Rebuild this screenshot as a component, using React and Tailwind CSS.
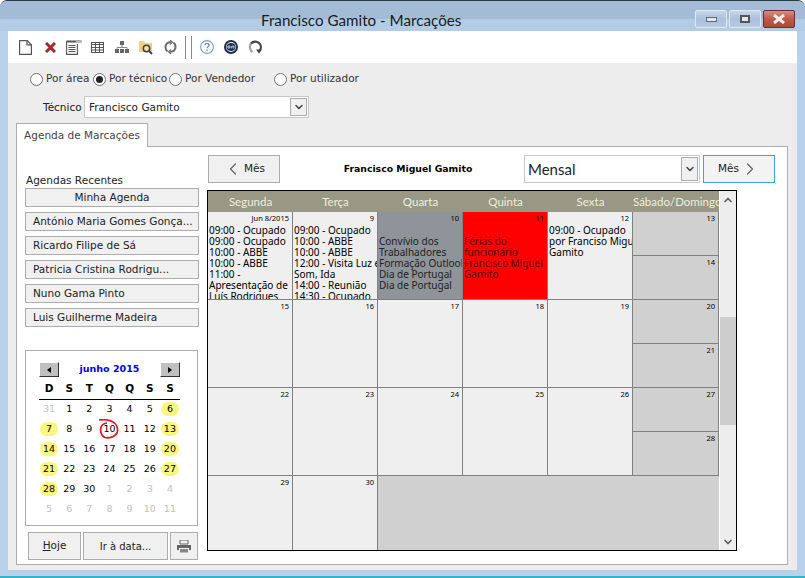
import { ChevronLeft, ChevronRight, ChevronDown, ChevronUp } from "lucide-react";

const UI = "font-['DejaVu_Sans',sans-serif]";
const SEGOE = "font-['Lato',sans-serif]";
const CELL = "font-['Noto_Sans',sans-serif]";

function Radio({ label, checked, width, low }) {
  return (
    <label className={`flex items-center gap-[3px] ${low ? "mt-px" : ""}`} style={{ width }}>
      <span className="flex h-[13px] w-[13px] shrink-0 items-center justify-center rounded-full border border-[#707070] bg-white">
        {checked && <span className="h-[7px] w-[7px] rounded-full bg-[#222]" />}
      </span>
      <span className="whitespace-nowrap text-[10.5px] text-[#333]">{label}</span>
    </label>
  );
}

function Dropdown() {
  return (
    <span className="flex h-full w-[17px] items-center justify-center border border-[#acacac] bg-[#f0f0f0] text-[#444]">
      <ChevronDown size={12} strokeWidth={3} />
    </span>
  );
}

function RecentButton({ label, center }) {
  return (
    <button
      className={`flex h-[19px] w-[174px] items-center whitespace-nowrap border border-[#acacac] bg-[#f0f0f0] pt-px text-[10.5px] text-[#222] ${
        center ? "justify-center" : "pl-[7px]"
      }`}
    >
      {label}
    </button>
  );
}

function ToolbarIcons() {
  return (
    <div className="flex h-[32px] items-center bg-white pl-[11px]">
      {/* novo */}
      <svg width="13" height="15" viewBox="0 0 13 15" fill="none" stroke="#555" strokeWidth="1.2">
        <path d="M.6.6h7.600l4.200 4.200v9.600H.6zM8 .8v4h4.200" />
      </svg>
      {/* apagar */}
      <svg className="ml-[13px]" width="11" height="11" viewBox="0 0 11 11" stroke="#a32a2c" strokeWidth="3">
        <path d="M1 1l9 9M10 1l-9 9" />
      </svg>
      {/* lista */}
      <svg className="ml-[10px]" width="16" height="15" viewBox="0 0 16 15" fill="none">
        <path d="M.5 1.500h15" stroke="#555" strokeWidth="2" />
        <rect x="10" y="1" width="5" height="2" fill="#bbb" />
        <path d="M.6 1v13.400h10.800V4" stroke="#555" strokeWidth="1.100" />
        <path d="M2.500 5.500h7M2.500 7.500h7M2.500 9.500h7M2.500 11.500h7" stroke="#555" />
      </svg>
      {/* tabela */}
      <svg className="ml-[9px]" width="13" height="11" viewBox="0 0 13 11" fill="none" stroke="#555">
        <rect x=".5" y=".5" width="12" height="10" />
        <path d="M.5 2.500h12M.5 5.500h12M.5 8h12M4.500 1v9M8.500 1v9" />
      </svg>
      {/* organigrama */}
      <svg className="ml-[11px]" width="14" height="12" viewBox="0 0 14 12" fill="#666">
        <rect x="5" y="0" width="4" height="4" />
        <path d="M7 4v3M2 8V6.500h10V8" stroke="#888" fill="none" />
        <rect x="0" y="8" width="4" height="4" />
        <rect x="5" y="8" width="4" height="4" />
        <rect x="10" y="8" width="4" height="4" />
      </svg>
      {/* pasta com lupa */}
      <svg className="ml-[10px]" width="14" height="15" viewBox="0 0 14 15">
        <path d="M0 1h5l1 2h7v9H0z" fill="#f5d27a" />
        <circle cx="7.500" cy="8.500" r="3.200" fill="#f7e2a8" stroke="#39494a" strokeWidth="1.600" />
        <path d="M10 11l3 3" stroke="#39494a" strokeWidth="2" />
      </svg>
      {/* atualizar */}
      <svg className="ml-[11px]" width="13" height="14" viewBox="0 0 13 14" fill="none" stroke="#6a6a6a" strokeWidth="2">
        <path d="M3.500 11.500C1 9.500.8 5.500 3 3.400 4 2.500 5.500 2 7 2.300" />
        <path d="M9.500 2.500c2.500 2 2.700 6 .5 8.100-1 .9-2.500 1.400-4 1.100" />
        <path d="M6 0l2.500 2.300L6 4.500M7 9.500L4.500 11.700 7 14" strokeWidth="1.200" />
      </svg>
      <span className="ml-[8px] h-[23px] w-px bg-[#8a8a8a]" />
      <span className="ml-[5px] h-[23px] w-px bg-[#8a8a8a]" />
      {/* ajuda */}
      <svg className="ml-[8px]" width="14" height="14" viewBox="0 0 14 14" fill="none">
        <circle cx="7" cy="7" r="6.400" stroke="#62a9d8" strokeWidth="1.100" />
        <path d="M5 5.300c0-1.200 1-1.800 2-1.800s2 .6 2 1.700c0 1.400-2 1.500-2 3M7 9.500v1.500" stroke="#777" strokeWidth="1.200" />
      </svg>
      {/* online */}
      <svg className="ml-[10px]" width="14" height="14" viewBox="0 0 14 14">
        <circle cx="7" cy="7" r="6" fill="#fff" stroke="#1b2f4d" strokeWidth="2" />
        <path d="M2.500 7c0-2.500 2-4 4.500-4s4.500 1.500 4.500 4-2 4-4.500 4-4.500-1.500-4.500-4z" fill="#1b2f4d" />
        <circle cx="5" cy="7" r="1.200" fill="none" stroke="#fff" strokeWidth=".8" />
        <path d="M7.800 8.500V6.200h2v2.300" fill="none" stroke="#fff" strokeWidth=".8" />
      </svg>
      {/* recarregar */}
      <svg className="ml-[10px]" width="14" height="14" viewBox="0 0 14 14" fill="none">
        <path d="M4.500 12C1.500 10 1 6 3 3.500" stroke="#a0a0a0" strokeWidth="2.200" />
        <path d="M3 3.500C5 1 9 1 11.300 3.300c2 2 2 5 .5 7" stroke="#444" strokeWidth="2.200" />
        <path d="M8 9.500h6l-3 4z" fill="#444" />
      </svg>
    </div>
  );
}

function WindowButton({ close, children }) {
  return (
    <span
      className={`flex h-[18px] w-[32px] items-center justify-center rounded-[2px] border ${
        close
          ? "border-[#6b2a35] bg-gradient-to-b from-[#d08f83] via-[#bb5a48] to-[#ad4a3c]"
          : "border-[#dfe9f4] bg-gradient-to-b from-[#c5d6e9] via-[#a9c1dc] to-[#b4cbe5]"
      }`}
    >
      {children}
    </span>
  );
}

function MiniCalendar() {
  const weeks = [
    [31, 1, 2, 3, 4, 5, 6],
    [7, 8, 9, 10, 11, 12, 13],
    [14, 15, 16, 17, 18, 19, 20],
    [21, 22, 23, 24, 25, 26, 27],
    [28, 29, 30, 1, 2, 3, 4],
    [5, 6, 7, 8, 9, 10, 11],
  ];
  return (
    <div className="mt-[23px] h-[176px] w-[173px] border border-[#acacac] bg-white px-[13px] pt-[11px]">
      <div className="flex h-[15px] w-[141px] items-center justify-between">
        <span className="flex h-[15px] w-[20px] items-center justify-center border border-t-white border-l-white border-r-[#333] border-b-[#333] bg-[#c0c0c0]">
          <span className="h-0 w-0 border-y-[3px] border-r-[4px] border-y-transparent border-r-black" />
        </span>
        <span className="text-[9.5px] font-bold text-[#0000ee]">junho 2015</span>
        <span className="flex h-[15px] w-[20px] items-center justify-center border border-t-white border-l-white border-r-[#333] border-b-[#333] bg-[#c0c0c0]">
          <span className="h-0 w-0 border-y-[3px] border-l-[4px] border-y-transparent border-l-black" />
        </span>
      </div>
      <div className="mt-[3px] grid h-[20px] w-[141px] grid-cols-7 items-center border-b border-black pb-[1px] text-center text-[10.5px] font-bold text-black">
        {["D", "S", "T", "Q", "Q", "S", "S"].map((d, i) => (
          <span key={i}>{d}</span>
        ))}
      </div>
      <div className="grid w-[141px] grid-cols-7">
        {weeks.flatMap((week, w) =>
          week.map((day, i) => {
            const muted = (w === 0 && day > 7) || (w >= 4 && day < 15 && !(w === 4 && day > 27));
            const weekend = !muted && (i === 0 || i === 6);
            const today = w === 1 && day === 10;
            return (
              <span key={`${w}-${i}`} className="relative flex h-[20px] items-center justify-center pb-[2px]">
                <span
                  className={`flex h-[14px] w-[18px] items-center justify-center rounded-full text-[9.5px] ${
                    weekend ? "bg-[#fbf77e]" : ""
                  } ${muted ? "text-[#c0c0c0]" : "text-black"}`}
                >
                  {day}
                </span>
                {today && (
                  <svg className="absolute left-[0px] top-[-1px]" width="20" height="20" viewBox="0 0 20 20" fill="none" stroke="#e8141c" strokeWidth="1.700">
                    <path d="M0 1C4 .5 10 .5 14 3c4 2 5.500 7 4 11-2 4-8 5.500-12 4.500C2 17 1 12 2 8c1-2.500 3-3.500 6-4" />
                  </svg>
                )}
              </span>
            );
          })
        )}
      </div>
    </div>
  );
}

function Cell({ day, bg = "bg-[#efefef]", color = "text-black", lines, top = "pt-[2px]", label }) {
  return (
    <div className={`overflow-hidden ${CELL} ${bg}`}>
      <div className="h-[11px] pr-[3px] pt-[1px] text-right text-[7.5px] leading-[11px] text-black">{label || day}</div>
      {lines && (
        <div className={`pl-px ${top} text-[10px] leading-[11px] ${color}`}>
          {lines.map((l, i) => (
            <div key={i} className="whitespace-nowrap">{l}</div>
          ))}
        </div>
      )}
    </div>
  );
}

function Weekend({ a, b }) {
  return (
    <div className={`flex flex-col gap-px ${CELL}`}>
      <div className="flex-1 bg-[#d0d0d0] pr-[3px] pt-[1px] text-right text-[7.5px] leading-[11px] text-black">{a}</div>
      <div className="flex-1 bg-[#d0d0d0] pr-[3px] pt-[1px] text-right text-[7.5px] leading-[11px] text-black">{b}</div>
    </div>
  );
}

function MonthGrid() {
  const headers = ["Segunda", "Terça", "Quarta", "Quinta", "Sexta", "Sábado/Domingo"];
  return (
    <div className="mt-[7px] -ml-px flex h-[361px] w-[530px] border border-black bg-[#ededed]">
      <div className="w-[511px]">
        <div className={`grid h-[21px] grid-cols-[repeat(5,85px)_86px] items-center bg-[#989884] text-center text-[11.5px] text-[#eeeedd] ${SEGOE}`}>
          {headers.map((h) => (
            <span key={h} className="whitespace-nowrap">{h}</span>
          ))}
        </div>
        <div className="grid h-[338px] grid-cols-[repeat(5,84px)_85px] grid-rows-[87px_87px_87px_74px] gap-px bg-[#808080] pr-px">
          <Cell label="Jun 8/2015" lines={["09:00 - Ocupado", "09:00 - Ocupado", "10:00 - ABBE", "10:00 - ABBE", "11:00 -", "Apresentação de", "Luís Rodrigues"]} />
          <Cell day="9" lines={["09:00 - Ocupado", "10:00 - ABBE", "10:00 - ABBE", "12:00 - Visita Luz e", "Som, Ida", "14:00 - Reunião", "14:30 - Ocupado"]} />
          <Cell day="10" bg="bg-[#8e9499]" color="text-[#222]" top="pt-[13px]" lines={["Convívio dos", "Trabalhadores", "Formação Outlook", "Dia de Portugal", "Dia de Portugal"]} />
          <Cell day="11" bg="bg-[#ff0000]" color="text-[#500000]" top="pt-[13px]" lines={["Férias do", "funcionário", "Francisco Miguel", "Gamito"]} />
          <Cell day="12" lines={["09:00 - Ocupado", "por Franciso Miguel", "Gamito"]} />
          <Weekend a="13" b="14" />
          {[15, 16, 17, 18, 19].map((d) => <Cell key={d} day={d} />)}
          <Weekend a="20" b="21" />
          {[22, 23, 24, 25, 26].map((d) => <Cell key={d} day={d} />)}
          <Weekend a="27" b="28" />
          <Cell day="29" />
          <Cell day="30" />
          <div className="col-span-4 mr-[-1px] bg-[#d0d0d0]" />
        </div>
      </div>
      {/* barra de rolagem */}
      <div className="flex w-[17px] flex-col items-center border-l border-white">
        <div className="flex h-[17px] items-center justify-center text-[#606060]">
          <ChevronUp size={12} strokeWidth={3.500} />
        </div>
        <div className="mt-[109px] h-[108px] w-full bg-[#cdcdcd]" />
        <div className="flex-1" />
        <div className="flex h-[17px] items-center justify-center text-[#606060]">
          <ChevronDown size={12} strokeWidth={3.500} />
        </div>
      </div>
    </div>
  );
}

export default function App() {
  return (
    <div className={`flex h-[578px] w-[805px] flex-col overflow-hidden rounded-t-[7px] border-t border-[#2c3a44] border-b-2 border-b-[#2fb6cb] bg-[#b9d1ea] ${UI}`}>
      {/* Title bar */}
      <div className="flex h-[30px] bg-gradient-to-b from-[#a3bbd7] from-[60%] to-[#b3cce6] to-[60%]">
        <span className={`pl-[261px] pt-[9px] text-[15.200px] leading-[20px] text-[#1a1a1a] ${SEGOE}`}>Francisco Gamito - Marcações</span>
        <div className="ml-auto flex gap-[2px] pr-[10px] pt-[9px]">
          <WindowButton>
            <span className="h-[5px] w-[11px] border border-[#666] bg-[#dfe8f2]" />
          </WindowButton>
          <WindowButton>
            <span className="h-[8px] w-[10px] border-2 border-[#555] bg-[#dfe8f2]" />
          </WindowButton>
          <WindowButton close>
            <svg width="14" height="10" viewBox="0 0 14 10" stroke="#f3ecec" strokeWidth="3">
              <path d="M2 1l10 8M12 1L2 9" />
            </svg>
          </WindowButton>
        </div>
      </div>

      {/* Client area */}
      <div className="mx-[8px] flex h-[539px] w-[789px] flex-col">
        <ToolbarIcons />
        <div className="h-[507px] bg-[#ededed]">
          <div className="flex h-[24px] items-end pl-[22px]">
            <Radio label="Por área" checked={false} width={63} />
            <Radio label="Por técnico" checked width={76} />
            <Radio label="Por Vendedor" width={105} low />
            <Radio label="Por utilizador" width={110} low />
          </div>
          <div className="mt-[9px] flex h-[22px] items-center pl-[35px]">
            <span className="w-[41px] pt-px text-[10.5px] text-[#222]">Técnico</span>
            <div className="flex h-[22px] w-[225px] items-center justify-between border border-[#c8c8c8] bg-white py-px pl-[3px] pr-px text-[10.5px] text-[#222]">
              <span className="pl-px pt-px">Francisco Gamito</span>
              <Dropdown />
            </div>
          </div>
          <div className="relative z-10 mt-[5px] ml-[8px] -mb-px flex h-[24px] w-[132px] items-center justify-center border border-b-0 border-[#acacac] bg-white text-[10.5px] text-[#444]">
            Agenda de Marcações
          </div>
          <div className="ml-[8px] flex h-[419px] w-[772px] border border-[#acacac] bg-white">
            {/* Left column */}
            <div className="ml-[8px] w-[174px] pt-[26px]">
              <div className="h-[15px] pl-px text-[10.5px] leading-[14px] text-[#222]">Agendas Recentes</div>
              <div className="flex flex-col gap-[5px]">
                <RecentButton label="Minha Agenda" center />
                <RecentButton label="António Maria Gomes Gonça..." />
                <RecentButton label="Ricardo Filipe de Sá" />
                <RecentButton label="Patricia Cristina Rodrigu..." />
                <RecentButton label="Nuno Gama Pinto" />
                <RecentButton label="Luis Guilherme Madeira" />
              </div>
              <MiniCalendar />
              <div className="mt-[6px] ml-[3px] flex h-[28px] gap-[2px] text-[10.5px] text-[#222]">
                <button className="w-[53px] border border-[#acacac] bg-[#f0f0f0]">
                  <span className="underline">H</span>oje
                </button>
                <button className="w-[85px] border border-[#acacac] bg-[#f0f0f0] text-[10px]">Ir à data...</button>
                <button className="flex w-[28px] items-center justify-center border border-[#acacac] bg-[#f0f0f0]">
                  <svg width="14" height="13" viewBox="0 0 14 13" fill="#666">
                    <path d="M3 0h8v4H3z" fill="none" stroke="#666" />
                    <path d="M0 5h14v5h-2V8H2v2H0z" />
                    <path d="M3 9h8v3.500H3z" fill="#888" />
                  </svg>
                </button>
              </div>
            </div>

            {/* Right column */}
            <div className="ml-[9px] pt-[8px]">
              <div className="flex h-[28px] w-[567px] items-center">
                <button className="flex h-[28px] w-[72px] items-center justify-center gap-[1px] border border-[#acacac] bg-[#f0f0f0] text-[10.5px] text-[#222]">
                  <ChevronLeft size={20} strokeWidth={1.500} className="text-[#666]" />
                  Mês
                </button>
                <span className="flex-1 whitespace-nowrap pl-[12px] text-center text-[9.300px] font-bold text-black">Francisco Miguel Gamito</span>
                <div className={`flex h-[28px] w-[176px] items-center justify-between border border-[#c8c8c8] bg-white p-px pl-[3px] text-[15px] text-[#222] ${SEGOE}`}>
                  Mensal
                  <Dropdown />
                </div>
                <button className="ml-[3px] flex h-[28px] w-[72px] items-center justify-center gap-[1px] border border-[#3f9ff1] bg-[#f3f3f3] text-[10.5px] text-[#222]">
                  Mês
                  <ChevronRight size={20} strokeWidth={1.500} className="text-[#666]" />
                </button>
              </div>
              <MonthGrid />
            </div>
          </div>
        </div>
      </div>
    </div>
  );
}
